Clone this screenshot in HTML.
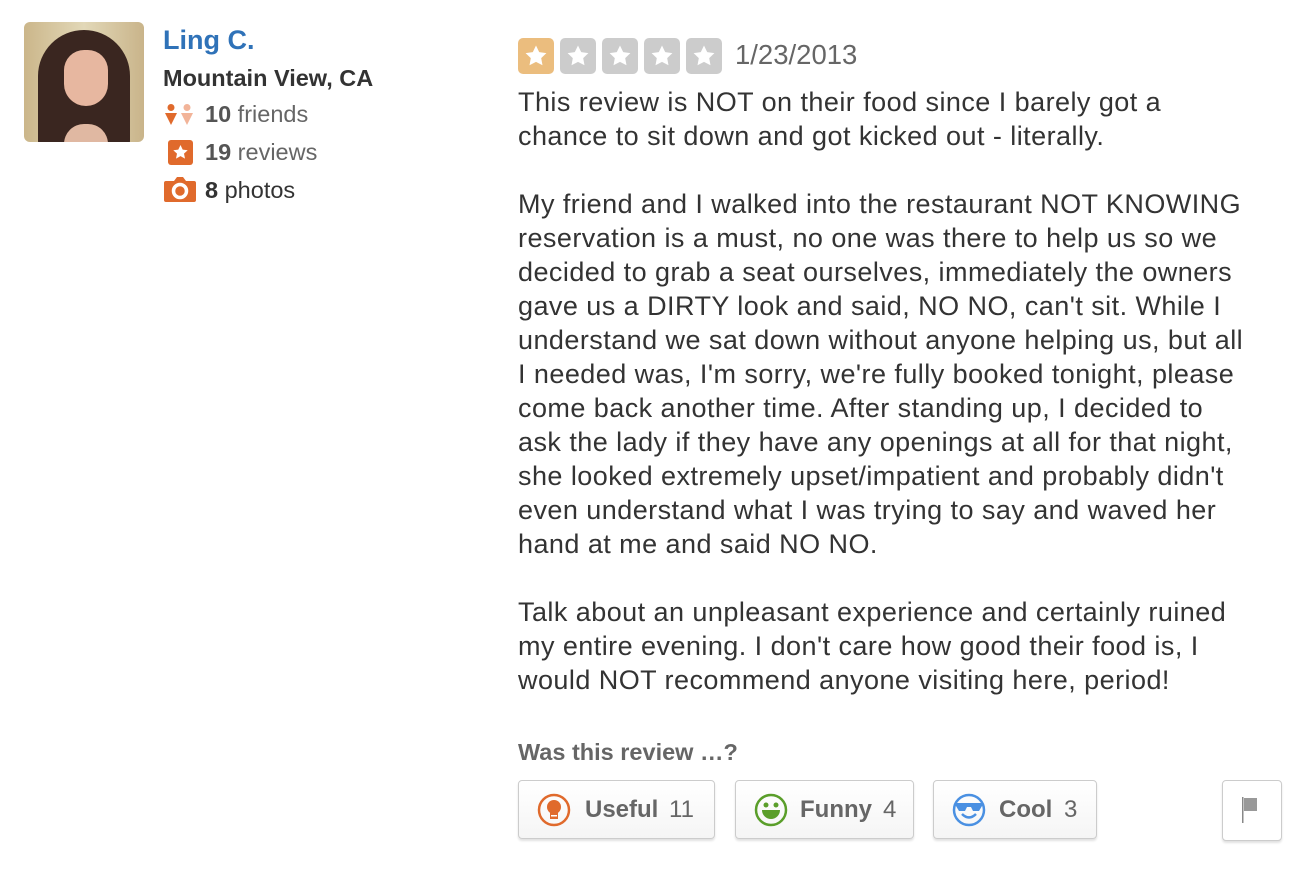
<!DOCTYPE html>
<html><head><style>
body{margin:0;width:1312px;height:872px;background:#fff;font-family:"Liberation Sans",sans-serif;position:relative;overflow:hidden}
.a{position:absolute;white-space:nowrap}
.t{position:absolute;left:518px;font-size:27px;letter-spacing:0.45px;color:#333;white-space:nowrap;line-height:34px}
.star{position:absolute;top:38px;width:36px;height:36px;border-radius:5px;background:#ccc}
.star svg{position:absolute;left:6px;top:6px}
.btn{position:absolute;top:780px;height:57px;border:1px solid #ccc;border-radius:4px;background:linear-gradient(#fff,#f5f5f5);box-shadow:0 2px 2px rgba(0,0,0,.12);font-size:24px;font-weight:bold;color:#666;line-height:57px}
.btn span{font-weight:normal;margin-left:10px}
</style></head><body>
<div class="a" style="left:24px;top:22px;width:120px;height:120px;border-radius:6px;background:linear-gradient(90deg,#cbb68a,#e2d8b8 50%,#c9b48a);overflow:hidden">
<div style="position:absolute;left:14px;top:8px;width:92px;height:130px;border-radius:46px 46px 20px 20px;background:#3a2620"></div>
<div style="position:absolute;left:40px;top:28px;width:44px;height:56px;border-radius:22px 22px 24px 24px;background:#e7b7a0"></div>
<div style="position:absolute;left:40px;top:102px;width:44px;height:20px;background:#e0b8a2;border-radius:20px 20px 0 0"></div></div>
<div class="a" style="left:163px;top:25px;font-size:27px;font-weight:bold;color:#2f72b8">Ling C.</div>
<div class="a" style="left:163px;top:65px;font-size:23.5px;font-weight:bold;color:#333">Mountain View, CA</div>
<svg class="a" style="left:165px;top:104px" width="30" height="22"><circle cx="6" cy="3.5" r="3.5" fill="#e06a2c"/><path d="M0 9h12l-6 12z" fill="#e06a2c"/><circle cx="22" cy="3.5" r="3.5" fill="#f2b499"/><path d="M16 9h12l-6 12z" fill="#f2b499"/></svg>
<div class="a" style="left:205px;top:101px;font-size:23.5px;color:#666"><b style="color:#555">10</b> friends</div>
<svg class="a" style="left:168px;top:140px" width="25" height="25"><rect width="25" height="25" rx="3" fill="#e06a2c"/><path d="M12.5 5l2.2 4.6 5 .6-3.7 3.4 1 5-4.5-2.5-4.5 2.5 1-5L5.3 10.2l5-.6z" fill="#fff"/></svg>
<div class="a" style="left:205px;top:139px;font-size:23.5px;color:#666"><b style="color:#555">19</b> reviews</div>
<svg class="a" style="left:164px;top:175px" width="32" height="27"><path d="M2 6h8l3-4h6l3 4h8a2 2 0 0 1 2 2v17a2 2 0 0 1-2 2H2a2 2 0 0 1-2-2V8a2 2 0 0 1 2-2z" fill="#e06a2c"/><circle cx="16" cy="16" r="6.5" fill="none" stroke="#fff" stroke-width="3.5"/></svg>
<div class="a" style="left:205px;top:177px;font-size:23.5px;color:#333"><b>8</b> photos</div>

<div class="star" style="left:518px;background:#ebbd7e"><svg width="24" height="24"><path d="M12 1.5l3.2 6.6 7.2 1-5.2 5 1.3 7.2L12 17.9l-6.5 3.4 1.3-7.2-5.2-5 7.2-1z" fill="#fff"/></svg></div>
<div class="star" style="left:560px"><svg width="24" height="24"><path d="M12 1.5l3.2 6.6 7.2 1-5.2 5 1.3 7.2L12 17.9l-6.5 3.4 1.3-7.2-5.2-5 7.2-1z" fill="#fff"/></svg></div>
<div class="star" style="left:602px"><svg width="24" height="24"><path d="M12 1.5l3.2 6.6 7.2 1-5.2 5 1.3 7.2L12 17.9l-6.5 3.4 1.3-7.2-5.2-5 7.2-1z" fill="#fff"/></svg></div>
<div class="star" style="left:644px"><svg width="24" height="24"><path d="M12 1.5l3.2 6.6 7.2 1-5.2 5 1.3 7.2L12 17.9l-6.5 3.4 1.3-7.2-5.2-5 7.2-1z" fill="#fff"/></svg></div>
<div class="star" style="left:686px"><svg width="24" height="24"><path d="M12 1.5l3.2 6.6 7.2 1-5.2 5 1.3 7.2L12 17.9l-6.5 3.4 1.3-7.2-5.2-5 7.2-1z" fill="#fff"/></svg></div>
<div class="a" style="left:735px;top:39px;font-size:27.5px;color:#666">1/23/2013</div>

<div class="t" style="top:85px">This review is NOT on their food since I barely got a</div>
<div class="t" style="top:119px">chance to sit down and got kicked out - literally.</div>
<div class="t" style="top:187px">My friend and I walked into the restaurant NOT KNOWING</div>
<div class="t" style="top:221px">reservation is a must, no one was there to help us so we</div>
<div class="t" style="top:255px">decided to grab a seat ourselves, immediately the owners</div>
<div class="t" style="top:289px">gave us a DIRTY look and said, NO NO, can't sit. While I</div>
<div class="t" style="top:323px">understand we sat down without anyone helping us, but all</div>
<div class="t" style="top:357px">I needed was, I'm sorry, we're fully booked tonight, please</div>
<div class="t" style="top:391px">come back another time. After standing up, I decided to</div>
<div class="t" style="top:425px">ask the lady if they have any openings at all for that night,</div>
<div class="t" style="top:459px">she looked extremely upset/impatient and probably didn't</div>
<div class="t" style="top:493px">even understand what I was trying to say and waved her</div>
<div class="t" style="top:527px">hand at me and said NO NO.</div>
<div class="t" style="top:595px">Talk about an unpleasant experience and certainly ruined</div>
<div class="t" style="top:629px">my entire evening. I don't care how good their food is, I</div>
<div class="t" style="top:663px">would NOT recommend anyone visiting here, period!</div>

<div class="a" style="left:518px;top:739px;font-size:23.5px;font-weight:bold;color:#666">Was this review …?</div>

<div class="btn" style="left:518px;width:195px"><svg class="a" style="left:18px;top:12px" width="34" height="34"><circle cx="17" cy="17" r="15" fill="none" stroke="#e06a2c" stroke-width="2.5"/><circle cx="17" cy="14" r="7" fill="#e06a2c"/><rect x="13" y="18" width="8" height="8" fill="#e06a2c"/><rect x="14" y="22" width="6" height="1.5" fill="#fff"/></svg><span style="position:absolute;left:66px;margin:0;font-weight:bold">Useful</span><span style="position:absolute;left:150px;margin:0">11</span></div>
<div class="btn" style="left:735px;width:177px"><svg class="a" style="left:18px;top:12px" width="34" height="34"><circle cx="17" cy="17" r="15" fill="none" stroke="#5a9e2a" stroke-width="2.5"/><circle cx="12" cy="12" r="2.5" fill="#5a9e2a"/><circle cx="22" cy="12" r="2.5" fill="#5a9e2a"/><path d="M8 17h18a9 9 0 0 1-18 0z" fill="#5a9e2a"/></svg><span style="position:absolute;left:64px;margin:0;font-weight:bold">Funny</span><span style="position:absolute;left:147px;margin:0">4</span></div>
<div class="btn" style="left:933px;width:162px"><svg class="a" style="left:18px;top:12px" width="34" height="34"><circle cx="17" cy="17" r="15" fill="none" stroke="#4a90e2" stroke-width="2.5"/><path d="M4 10h26v3l-3 5h-6l-2-4h-4l-2 4H7l-3-5z" fill="#4a90e2"/><path d="M10 21q7 7 14 0" fill="none" stroke="#4a90e2" stroke-width="2.5"/></svg><span style="position:absolute;left:65px;margin:0;font-weight:bold">Cool</span><span style="position:absolute;left:130px;margin:0">3</span></div>
<div class="btn" style="left:1222px;width:58px;height:59px;background:#fff"><svg class="a" style="left:19px;top:16px" width="20" height="28"><rect x="0" y="0" width="1.5" height="26" fill="#888"/><rect x="2" y="1" width="13" height="13" fill="#999"/></svg></div>
</body></html>
